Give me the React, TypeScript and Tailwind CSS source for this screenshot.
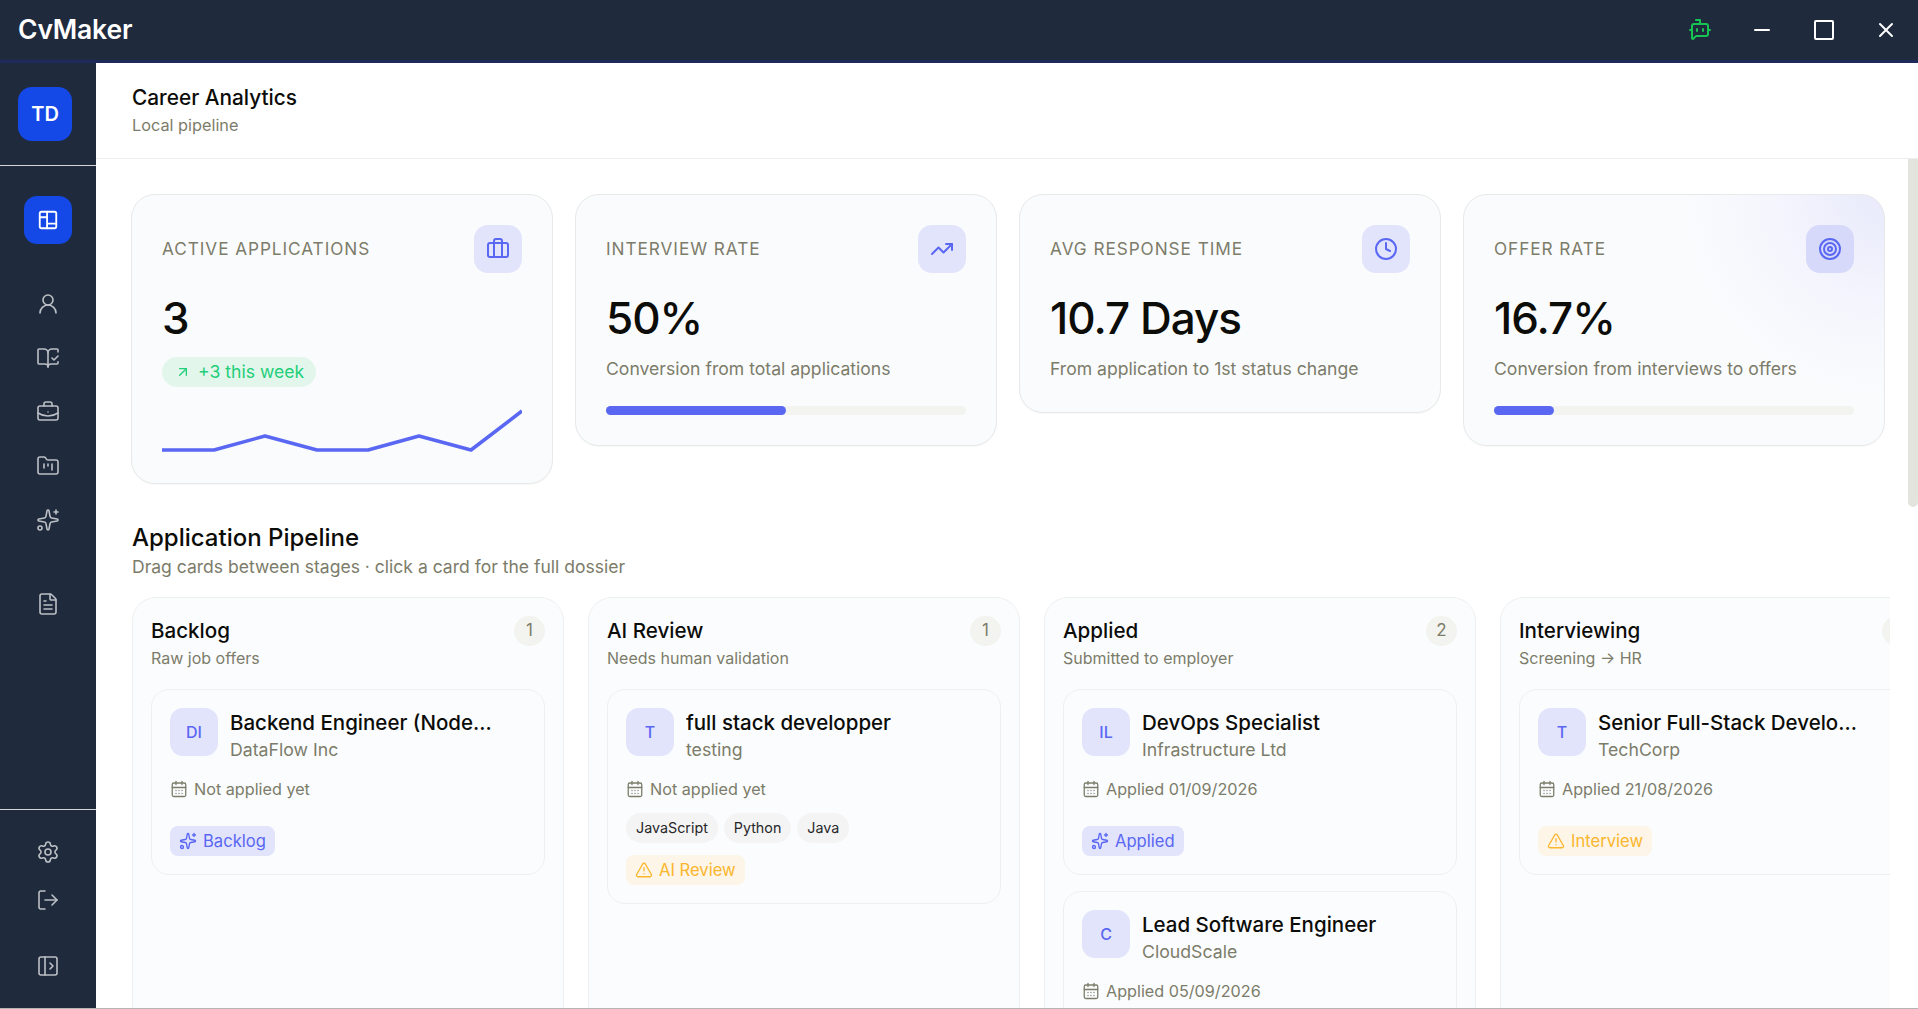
import {
  ArrowUpRight,
  BookOpenCheck,
  BotMessageSquare,
  Briefcase,
  BriefcaseBusiness,
  CalendarDays,
  Clock,
  FileText,
  FolderKanban,
  LogOut,
  Minus,
  PanelLeftOpen,
  Settings,
  Sparkles,
  Target,
  TrendingUp,
  TriangleAlert,
  UserRound,
  X,
  type LucideIcon,
} from "lucide-react";
import type { ReactNode } from "react";

const SPARK = "0,49 52,49 103,35 155,49 206,49 257,35 309,49 360,10";

function NavIcon({ icon: Icon, className = "" }: { icon: LucideIcon; className?: string }) {
  return (
    <div className={`flex h-[24px] w-[24px] items-center justify-center text-[#bcc0c6] ${className}`}>
      <Icon size={24} strokeWidth={1.6} />
    </div>
  );
}

function Sidebar() {
  return (
    <aside className="flex w-[95.5px] shrink-0 flex-col bg-[#1f2a3c]">
      <div className="flex h-[103px] shrink-0 items-start border-b border-[#d3d5d9] pl-[18px] pt-[24px]">
        <div className="flex h-[54px] w-[54px] items-center justify-center rounded-[14px] bg-[#1449e8] text-[20px] font-semibold text-white">
          TD
        </div>
      </div>
      <div className="flex flex-1 flex-col items-center pl-[1px] pt-[30px]">
        <div className="flex h-[48px] w-[48px] items-center justify-center rounded-[13px] bg-[#1449e8] text-white">
          <svg width="22" height="22" viewBox="0 0 24 24" fill="none" stroke="currentColor" strokeWidth="2" strokeLinecap="round" strokeLinejoin="round">
            <rect x="3" y="3" width="18" height="18" rx="2" />
            <path d="M11 3v18M3 9h8M11 16h10" />
          </svg>
        </div>
        <NavIcon icon={UserRound} className="mt-[48px]" />
        <NavIcon icon={BookOpenCheck} className="mt-[30px]" />
        <NavIcon icon={BriefcaseBusiness} className="mt-[30px]" />
        <NavIcon icon={FolderKanban} className="mt-[30px]" />
        <NavIcon icon={Sparkles} className="mt-[30px]" />
        <NavIcon icon={FileText} className="mt-[60px]" />
      </div>
      <div className="flex h-[199px] shrink-0 flex-col items-center border-t border-[#d3d5d9] pl-[1px] pt-[30px]">
        <NavIcon icon={Settings} />
        <NavIcon icon={LogOut} className="mt-[24px]" />
        <NavIcon icon={PanelLeftOpen} className="mt-[42px]" />
      </div>
    </aside>
  );
}

function StatCard({
  label,
  icon: Icon,
  value,
  desc,
  progress,
  glow,
  children,
}: {
  label: string;
  icon: LucideIcon;
  value: string;
  desc?: string;
  progress?: number;
  glow?: boolean;
  children?: ReactNode;
}) {
  return (
    <div
      className={`w-[422px] shrink-0 self-start rounded-[24px] border border-[#e8e9e9] px-[30px] pb-[30px] pt-[30px] shadow-[0_1px_1px_rgba(0,0,0,0.03)] ${
        glow
          ? "bg-[radial-gradient(circle_at_100%_0%,#e8eafb_0px,#f0f1fc_70px,#f6f7fd_130px,#fafbfd_200px)]"
          : "bg-[#fafbfd]"
      }`}
    >
      <div className="flex items-center justify-between">
        <span className="text-[17.2px] tracking-[0.95px] text-[#7c7c6a]">{label}</span>
        <div
          className={`flex h-[48px] w-[48px] items-center justify-center rounded-[14px] text-[#5a67f2] ${
            glow ? "bg-[#d6d9f9]" : "bg-[#e2e4fc]"
          }`}
        >
          <Icon size={24} strokeWidth={2} />
        </div>
      </div>
      <div className="mt-[18px] h-[54px] text-[44px] font-medium leading-[54px] tracking-[-1px] text-[#0c0c09]">{value}</div>
      {desc && <div className="mt-[11px] h-[26px] text-[17.6px] leading-[26px] text-[#7c7c6a]">{desc}</div>}
      {children}
      {progress !== undefined && (
        <div className="mt-[24px] h-[9px] w-full rounded-full bg-[#f3f4f0]">
          <div className="h-full rounded-full bg-[#5a67f2]" style={{ width: `${progress}%` }} />
        </div>
      )}
    </div>
  );
}

function ActiveExtras() {
  return (
    <>
      <div className="mt-[12px] flex h-[30px] w-[154px] items-center gap-[7px] rounded-full bg-[#e3f6ec] pl-[13px] text-[17.6px] text-[#22ce79]">
        <ArrowUpRight size={16} strokeWidth={2} />
        <span>+3 this week</span>
      </div>
      <svg viewBox="0 0 360 52" className="mt-[14px] block h-[52px] w-[360px]">
        <polyline points={SPARK} fill="none" stroke="#5a67f2" strokeWidth="3.5" strokeLinejoin="round" />
      </svg>
    </>
  );
}

type Job = {
  initials: string;
  title: string;
  company: string;
  date: string;
  tags?: string[];
  status: string;
  warn?: boolean;
};

function JobCard({ job }: { job: Job }) {
  const StatusIcon = job.warn ? TriangleAlert : Sparkles;
  return (
    <div className="rounded-[18px] border border-[#eef0f0] bg-[#fbfcfe] px-[18px] pb-[18px] pt-[18px]">
      <div className="flex gap-[12px]">
        <div className="flex h-[48px] w-[48px] shrink-0 items-center justify-center rounded-[13px] bg-[#e2e4fc] text-[16px] font-medium text-[#5a67f2]">
          {job.initials}
        </div>
        <div className="h-[54px] min-w-0 flex-1 pt-[1px]">
          <div className="truncate text-[20.5px] font-medium leading-[28px] text-[#0c0c09]">{job.title}</div>
          <div className="text-[17.7px] leading-[26px] text-[#7c7c6a]">{job.company}</div>
        </div>
      </div>
      <div className="mt-[14px] flex h-[26px] items-center gap-[6px] text-[16.2px] text-[#7c7c6a]">
        <CalendarDays size={18} strokeWidth={1.7} />
        <span>{job.date}</span>
      </div>
      {job.tags ? (
        <div className="mt-[11px] flex gap-[6px]">
          {job.tags.map((t) => (
            <span key={t} className="flex h-[30px] items-center rounded-full bg-[#f4f4f4] px-[10px] text-[14.3px] text-[#27272a]">
              {t}
            </span>
          ))}
        </div>
      ) : null}
      <div className={`${job.tags ? "mt-[12px]" : "mt-[24px]"} flex`}>
        <span
          className={`flex h-[30px] items-center gap-[6px] rounded-[8px] px-[9px] text-[16.6px] ${
            job.warn ? "bg-[#fdf5e7] text-[#fbb62d]" : "bg-[#e2e4fc] text-[#5a67f2]"
          }`}
        >
          <StatusIcon size={18} strokeWidth={1.8} />
          {job.status}
        </span>
      </div>
    </div>
  );
}

function Column({ title, sub, count, jobs }: { title: string; sub: string; count: number; jobs: Job[] }) {
  return (
    <div className="w-[432px] shrink-0 rounded-[24px] border border-[#eef0f0] bg-[#fbfcfe] px-[18px] pt-[18px]">
      <div className="flex items-start justify-between">
        <div>
          <div className="text-[20.6px] font-medium leading-[30px] text-[#0c0c09]">{title}</div>
          <div className="text-[16px] leading-[24px] text-[#7c7c6a]">{sub}</div>
        </div>
        <div className="flex h-[30px] w-[31px] items-center justify-center rounded-full bg-[#f3f4ef] text-[17px] text-[#7c7c6a]">
          {count}
        </div>
      </div>
      <div className="mt-[19px] flex flex-col gap-[16px]">
        {jobs.map((j) => (
          <JobCard key={j.title} job={j} />
        ))}
      </div>
    </div>
  );
}

export default function App() {
  return (
    <div className="flex h-[1009px] w-full flex-col overflow-hidden border-b border-[#b4b4b4] bg-white font-['Inter',sans-serif]">
      <header className="flex h-[63px] shrink-0 items-center border-b-[3px] border-[#1e2a5c] bg-[#1f2a3c]">
        <span className="pl-[18px] text-[26.5px] font-semibold tracking-[-0.2px] text-white">CvMaker</span>
        <div className="ml-auto flex items-center text-white">
          <BotMessageSquare size={24} strokeWidth={2} className="mr-[38px] text-[#16c454]" />
          <Minus size={24} strokeWidth={2} className="mr-[40px]" />
          <div className="mr-[40px] h-[20px] w-[20px] rounded-[2px] border-2 border-white" />
          <X size={24} strokeWidth={2} className="mr-[20px]" />
        </div>
      </header>
      <div className="flex min-h-0 flex-1">
        <Sidebar />
        <main className="flex min-w-0 flex-1 flex-col">
          <div className="h-[96px] shrink-0 border-b border-[#eeeeee] pl-[36.5px] pt-[19px]">
            <div className="text-[20.8px] font-medium leading-[32px] text-[#0c0c09]">Career Analytics</div>
            <div className="text-[16.3px] leading-[23px] text-[#7c7c6a]">Local pipeline</div>
          </div>
          <div className="flex min-h-0 flex-1">
            <div className="min-w-0 flex-1 overflow-hidden pl-[35.5px] pr-[18px] pt-[35px]">
              <div className="flex gap-[22px]">
                <StatCard label="ACTIVE APPLICATIONS" icon={Briefcase} value="3">
                  <ActiveExtras />
                </StatCard>
                <StatCard label="INTERVIEW RATE" icon={TrendingUp} value="50%" desc="Conversion from total applications" progress={50} />
                <StatCard label="AVG RESPONSE TIME" icon={Clock} value="10.7 Days" desc="From application to 1st status change" />
                <StatCard label="OFFER RATE" icon={Target} value="16.7%" desc="Conversion from interviews to offers" progress={16.7} glow />
              </div>
              <h2 className="ml-[1px] mt-[37px] text-[24px] font-medium leading-[33px] text-[#0c0c09]">Application Pipeline</h2>
              <p className="ml-[1px] text-[17.55px] leading-[26px] text-[#7c7c6a]">Drag cards between stages · click a card for the full dossier</p>
              <div className="ml-[1px] mt-[17px] flex gap-[24px] overflow-hidden">
                <Column
                  title="Backlog"
                  sub="Raw job offers"
                  count={1}
                  jobs={[{ initials: "DI", title: "Backend Engineer (Node...", company: "DataFlow Inc", date: "Not applied yet", status: "Backlog" }]}
                />
                <Column
                  title="AI Review"
                  sub="Needs human validation"
                  count={1}
                  jobs={[
                    {
                      initials: "T",
                      title: "full stack developper",
                      company: "testing",
                      date: "Not applied yet",
                      tags: ["JavaScript", "Python", "Java"],
                      status: "AI Review",
                      warn: true,
                    },
                  ]}
                />
                <Column
                  title="Applied"
                  sub="Submitted to employer"
                  count={2}
                  jobs={[
                    { initials: "IL", title: "DevOps Specialist", company: "Infrastructure Ltd", date: "Applied 01/09/2026", status: "Applied" },
                    { initials: "C", title: "Lead Software Engineer", company: "CloudScale", date: "Applied 05/09/2026", status: "Applied" },
                  ]}
                />
                <Column
                  title="Interviewing"
                  sub="Screening → HR"
                  count={1}
                  jobs={[
                    { initials: "T", title: "Senior Full-Stack Develo...", company: "TechCorp", date: "Applied 21/08/2026", status: "Interview", warn: true },
                  ]}
                />
              </div>
            </div>
            <div className="w-[10px] shrink-0">
              <div className="h-[348px] w-full rounded-b-[5px] bg-[#e4e4df]" />
            </div>
          </div>
        </main>
      </div>
    </div>
  );
}
